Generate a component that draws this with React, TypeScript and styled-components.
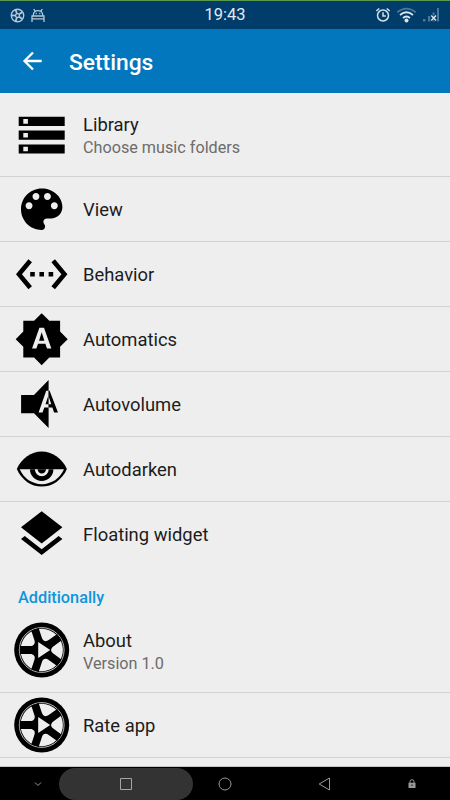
import React from 'react';
import styled, { createGlobalStyle } from 'styled-components';

const GlobalStyle = createGlobalStyle`
  * { box-sizing: border-box; }
  body { margin: 0; background: #eeeeee; font-family: Roboto, "Liberation Sans", sans-serif; }
`;

const Screen = styled.div`
  width: 450px;
  height: 800px;
  display: flex;
  flex-direction: column;
  overflow: hidden;
  background: #eeeeee;
`;

const StatusBar = styled.header`
  height: 29px;
  flex: none;
  display: grid;
  grid-template-columns: 1fr auto 1fr;
  align-items: center;
  border-top: 1px solid #5b9a4c;
  background: #003d6b;
  color: #e3eaf1;
`;

const StatusGroup = styled.div<{ $end?: boolean }>`
  display: flex;
  justify-content: ${(p) => (p.$end ? 'flex-end' : 'flex-start')};
  padding: ${(p) => (p.$end ? '0 10px 0 0' : '0 0 0 10px')};
  gap: ${(p) => (p.$end ? '5px' : '6px')};
  svg { display: block; }
`;

const Clock = styled.time`
  font-size: 16.5px;
  line-height: 28px;
`;

const AppBar = styled.div`
  height: 64px;
  flex: none;
  display: flex;
  align-items: center;
  padding-left: 18px;
  gap: 23px;
  background: #0277bd;
  color: #fff;
`;

const BackButton = styled.button`
  width: 28px;
  height: 28px;
  padding: 0;
  border: 0;
  background: none;
  color: inherit;
  svg { display: block; }
`;

const Title = styled.h1`
  margin: 4px 0 0;
  font-size: 22.8px;
  font-weight: 500;
  line-height: 28px;
`;

const Content = styled.main`
  flex: 1;
  min-height: 0;
  overflow: hidden;
  border-bottom: 1px solid #c4c4c4;
`;

const Row = styled.div<{ $height: number; $last?: boolean }>`
  height: ${(p) => p.$height}px;
  display: flex;
  align-items: center;
  padding-left: 14px;
  gap: 13px;
  border-bottom: 1px solid ${(p) => (p.$last ? 'transparent' : '#d2d2d2')};
`;

const RowIcon = styled.svg`
  width: 56px;
  height: 56px;
  flex: none;
`;

const Labels = styled.div<{ $double: boolean }>`
  display: flex;
  flex-direction: column;
  padding-top: ${(p) => (p.$double ? 3 : 1)}px;
`;

const Name = styled.span`
  font-size: 18.4px;
  line-height: 24px;
  color: #1c1c1c;
`;

const Summary = styled.span`
  font-size: 16.2px;
  line-height: 22px;
  color: #6c6c6c;
`;

const SectionTitle = styled.h2`
  height: 41px;
  margin: 0;
  padding: 19px 0 0 18px;
  font-size: 16.3px;
  font-weight: 500;
  line-height: 24px;
  color: #0d96dc;
`;

const NavBar = styled.nav`
  height: 33px;
  flex: none;
  display: grid;
  grid-template-columns: 59px 134px 64px 134px 42px;
  align-items: stretch;
  background: #000;
`;

const NavItem = styled.div<{ $active?: boolean; $pad?: number }>`
  display: flex;
  align-items: center;
  justify-content: center;
  padding-left: ${(p) => p.$pad ?? 0}px;
  margin-top: ${(p) => (p.$active ? 1 : 0)}px;
  border-radius: 16px;
  background: ${(p) => (p.$active ? '#333' : 'transparent')};
  svg { display: block; }
`;

const Material = ({ d }: { d: string }) => (
  <RowIcon viewBox="0 0 56 56">
    <path transform="translate(0.1 0.6) scale(2.3)" d={d} />
  </RowIcon>
);

const STORAGE = 'M2 20h20v-4H2v4zm2-3h2v2H4v-2zM2 4v4h20V4H2zm4 3H4V5h2v2zm-4 7h20v-4H2v4zm2-3h2v2H4v-2z';
const PALETTE =
  'M12 3c-4.97 0-9 4.03-9 9s4.03 9 9 9c.83 0 1.5-.67 1.5-1.5 0-.39-.15-.74-.39-1.01-.23-.26-.38-.61-.38-.99 0-.83.67-1.5 1.5-1.5H16c2.76 0 5-2.24 5-5 0-4.42-4.03-8-9-8zm-5.5 9c-.83 0-1.5-.67-1.5-1.5S5.67 9 6.5 9 8 9.67 8 10.5 7.33 12 6.5 12zm3-4C8.67 8 8 7.33 8 6.5S8.67 5 9.5 5s1.5.67 1.5 1.5S10.33 8 9.5 8zm5 0c-.83 0-1.5-.67-1.5-1.5S13.67 5 14.5 5s1.5.67 1.5 1.5S15.33 8 14.5 8zm3 4c-.83 0-1.5-.67-1.5-1.5S16.67 9 17.5 9s1.5.67 1.5 1.5-.67 1.5-1.5 1.5z';
const ETHERNET =
  'M7.77 6.76L6.23 5.48.82 12l5.41 6.52 1.54-1.28L3.42 12l4.35-5.24zM7 13h2v-2H7v2zm10-2h-2v2h2v-2zm-6 2h2v-2h-2v2zm6.77-7.52l-1.54 1.28L20.58 12l-4.35 5.24 1.54 1.28L23.18 12l-5.41-6.52z';
const BRIGHTNESS_AUTO =
  'M10.85 12.65h2.3L12 9l-1.15 3.65zM20 8.69V4h-4.69L12 .69 8.69 4H4v4.69L.69 12 4 15.31V20h4.69L12 23.31 15.31 20H20v-4.69L23.31 12 20 8.69zM14.3 16l-.7-2h-3.2l-.7 2H7.8L11 7h2l3.2 9h-1.9z';
const LAYERS =
  'M11.99 18.54l-7.37-5.73L3 14.07l9 7 9-7-1.63-1.27-7.38 5.74zM12 16l7.36-5.73L21 9l-9-7-9 7 1.63 1.27L12 16z';

const AutoVolumeIcon = () => {
  const letter = 'M24.6 36.6L32.2 14.7H35.6L44 36.6H40.1L38.4 31.6H30.3L28.5 36.6zM31.5 28.2H37.3L34.4 19.4z';
  return (
    <RowIcon viewBox="0 0 56 56">
      <clipPath id="overCone"><rect x="0" y="0" width="34.6" height="56" /></clipPath>
      <clipPath id="besideCone"><rect x="34.6" y="0" width="22" height="56" /></clipPath>
      <path d="M7.1 18.9H20L34.6 4V52L20 37.2H7.1z" />
      <path d={letter} fillRule="evenodd" fill="#eee" clipPath="url(#overCone)" />
      <path d={letter} fillRule="evenodd" clipPath="url(#besideCone)" />
    </RowIcon>
  );
};

const EyeIcon = () => (
  <RowIcon viewBox="0 0 56 56">
    <path d="M2.8 28C7.6 17.3 17.3 10.6 27.7 10.6S48 17.3 52.9 28C48 38.9 38.5 45.6 27.7 45.6S7.6 38.9 2.8 28z" />
    <path d="M5.7 28.3H50C45.8 37.5 37.6 43.2 27.8 43.2S9.9 37.5 5.7 28.3z" fill="#eee" />
    <path d="M16 28.2a11.7 11.7 0 0 0 23.4 0z" />
    <path d="M20.9 28.3a6.9 6.9 0 0 0 13.8 0h-2.7a4.2 4.2 0 0 1-8.4 0z" fill="#eee" />
  </RowIcon>
);

const SPOKES = [36, 108, 180, 252, 324];

const WheelIcon = () => (
  <RowIcon viewBox="-27.7 -28 56 56">
    <circle r="27.5" />
    <circle r="22.4" fill="none" stroke="#eee" strokeWidth="0.8" />
    <circle r="21.2" fill="#eee" />
    {SPOKES.map((angle) => (
      <path
        key={angle}
        transform={`rotate(${angle})`}
        d="M0 -5.5L7.4 -5.7C8.6 -4.4 9.8 -3.9 11.5 -3.9H21.9V3.9H11.5C9.8 3.9 8.6 4.4 7.4 5.7L0 5.5z"
      />
    ))}
    <path d="M-3.5 -8L8.5 0L-3.5 8z" fill="#eee" />
  </RowIcon>
);

type Setting = { name: string; summary?: string; icon: React.ReactNode; height: number; last?: boolean };

const MAIN: Setting[] = [
  { name: 'Library', summary: 'Choose music folders', icon: <Material d={STORAGE} />, height: 84 },
  { name: 'View', icon: <Material d={PALETTE} />, height: 65 },
  { name: 'Behavior', icon: <Material d={ETHERNET} />, height: 65 },
  { name: 'Automatics', icon: <Material d={BRIGHTNESS_AUTO} />, height: 65 },
  { name: 'Autovolume', icon: <AutoVolumeIcon />, height: 65 },
  { name: 'Autodarken', icon: <EyeIcon />, height: 65 },
  { name: 'Floating widget', icon: <Material d={LAYERS} />, height: 65, last: true },
];

const ADDITIONAL: Setting[] = [
  { name: 'About', summary: 'Version 1.0', icon: <WheelIcon />, height: 85 },
  { name: 'Rate app', icon: <WheelIcon />, height: 65 },
];

const SettingRow = ({ name, summary, icon, height, last }: Setting) => (
  <Row $height={height} $last={last}>
    {icon}
    <Labels $double={Boolean(summary)}>
      <Name>{name}</Name>
      {summary && <Summary>{summary}</Summary>}
    </Labels>
  </Row>
);

export default function App() {
  return (
    <>
      <GlobalStyle />
      <Screen>
        <StatusBar>
          <StatusGroup>
            <svg width="15" height="15" viewBox="-7.5 -7.5 15 15" fill="none" stroke="#b4c8d9">
              <circle r="6.2" strokeWidth="1.4" />
              <circle r="1.9" strokeWidth="1.3" />
              {SPOKES.map((a) => (
                <path key={a} d="M2 0H6" strokeWidth="1.8" transform={`rotate(${a})`} />
              ))}
            </svg>
            <svg width="14" height="15" viewBox="0 0 14 15" fill="none" stroke="#b4c8d9" strokeWidth="1.3">
              <path d="M2.3 7.2C2.3 4.2 4.3 2.6 7 2.6S11.7 4.2 11.7 7.2M4.3 3.3L2.7 1M9.7 3.3L11.3 1M1 14V10.8H13V14M1 8H13V10.8H1z" />
              <path d="M4.7 5.5H5.8M8.2 5.5H9.3" />
            </svg>
          </StatusGroup>
          <Clock>19:43</Clock>
          <StatusGroup $end>
            <svg width="16" height="16" viewBox="0 0 16 16" fill="none" stroke="#d7e0e9" strokeWidth="1.5">
              <circle cx="8" cy="8.5" r="5.5" />
              <path d="M8 5.3V9H10.8M1.3 4L4.3 1.5M14.7 4L11.7 1.5" />
            </svg>
            <svg width="21" height="16" viewBox="0 0 21 16" fill="none" strokeWidth="1.8">
              <path d="M1.2 5.3Q10.5 -2 19.8 5.3" stroke="#4b7799" />
              <path d="M4 8Q10.5 2.6 17 8M7 11Q10.5 8 14 11" stroke="#dce5ed" />
              <circle cx="10.5" cy="13.4" r="2" fill="#dce5ed" />
            </svg>
            <svg width="18" height="16" viewBox="0 0 18 16">
              <path d="M1 12h2.5v2.5H1zM6 9h2.2v5.5H6zM10.5 5.5h2.2v9h-2.2zM15 1h2v13.5h-2z" fill="#4b7799" />
              <path d="M9.5 8.5L14 13.5M14 8.5L9.5 13.5" stroke="#003d6b" strokeWidth="3" />
              <path d="M9.3 8.5L14 13.5M14 8.5L9.3 13.5" stroke="#dce5ed" strokeWidth="1.5" />
            </svg>
          </StatusGroup>
        </StatusBar>
        <AppBar>
          <BackButton aria-label="Back">
            <svg width="28" height="28" viewBox="0 0 28 28" fill="none" stroke="#fff" strokeWidth="2.3">
              <path d="M23.7 14H6.5M15 5.5L6.5 14L15 22.5" />
            </svg>
          </BackButton>
          <Title>Settings</Title>
        </AppBar>
        <Content>
          {MAIN.map((s) => (
            <SettingRow key={s.name} {...s} />
          ))}
          <SectionTitle>Additionally</SectionTitle>
          {ADDITIONAL.map((s) => (
            <SettingRow key={s.name} {...s} />
          ))}
        </Content>
        <NavBar>
          <NavItem $pad={17}>
            <svg width="8" height="6" viewBox="0 0 8 6" fill="none" stroke="#999">
              <path d="M1 1.5L4 4.5L7 1.5" />
            </svg>
          </NavItem>
          <NavItem $active>
            <svg width="12" height="12" viewBox="0 0 12 12" fill="none" stroke="#a5a5a5">
              <path d="M.5 .5h11v11H.5z" />
            </svg>
          </NavItem>
          <NavItem>
            <svg width="14" height="14" viewBox="0 0 14 14" fill="none" stroke="#999">
              <circle cx="7" cy="7" r="6" />
            </svg>
          </NavItem>
          <NavItem>
            <svg width="13" height="14" viewBox="0 0 13 14" fill="none" stroke="#999">
              <path d="M11.5 1V13L1.2 7z" />
            </svg>
          </NavItem>
          <NavItem>
            <svg width="8" height="9" viewBox="0 0 8 9">
              <path d="M2 4V2.7a2 2 0 0 1 4 0V4" fill="none" stroke="#999" />
              <path d="M.5 3.7h7V9h-7zM3.5 5.5v1.5h1V5.5z" fill="#999" fillRule="evenodd" />
            </svg>
          </NavItem>
        </NavBar>
      </Screen>
    </>
  );
}
